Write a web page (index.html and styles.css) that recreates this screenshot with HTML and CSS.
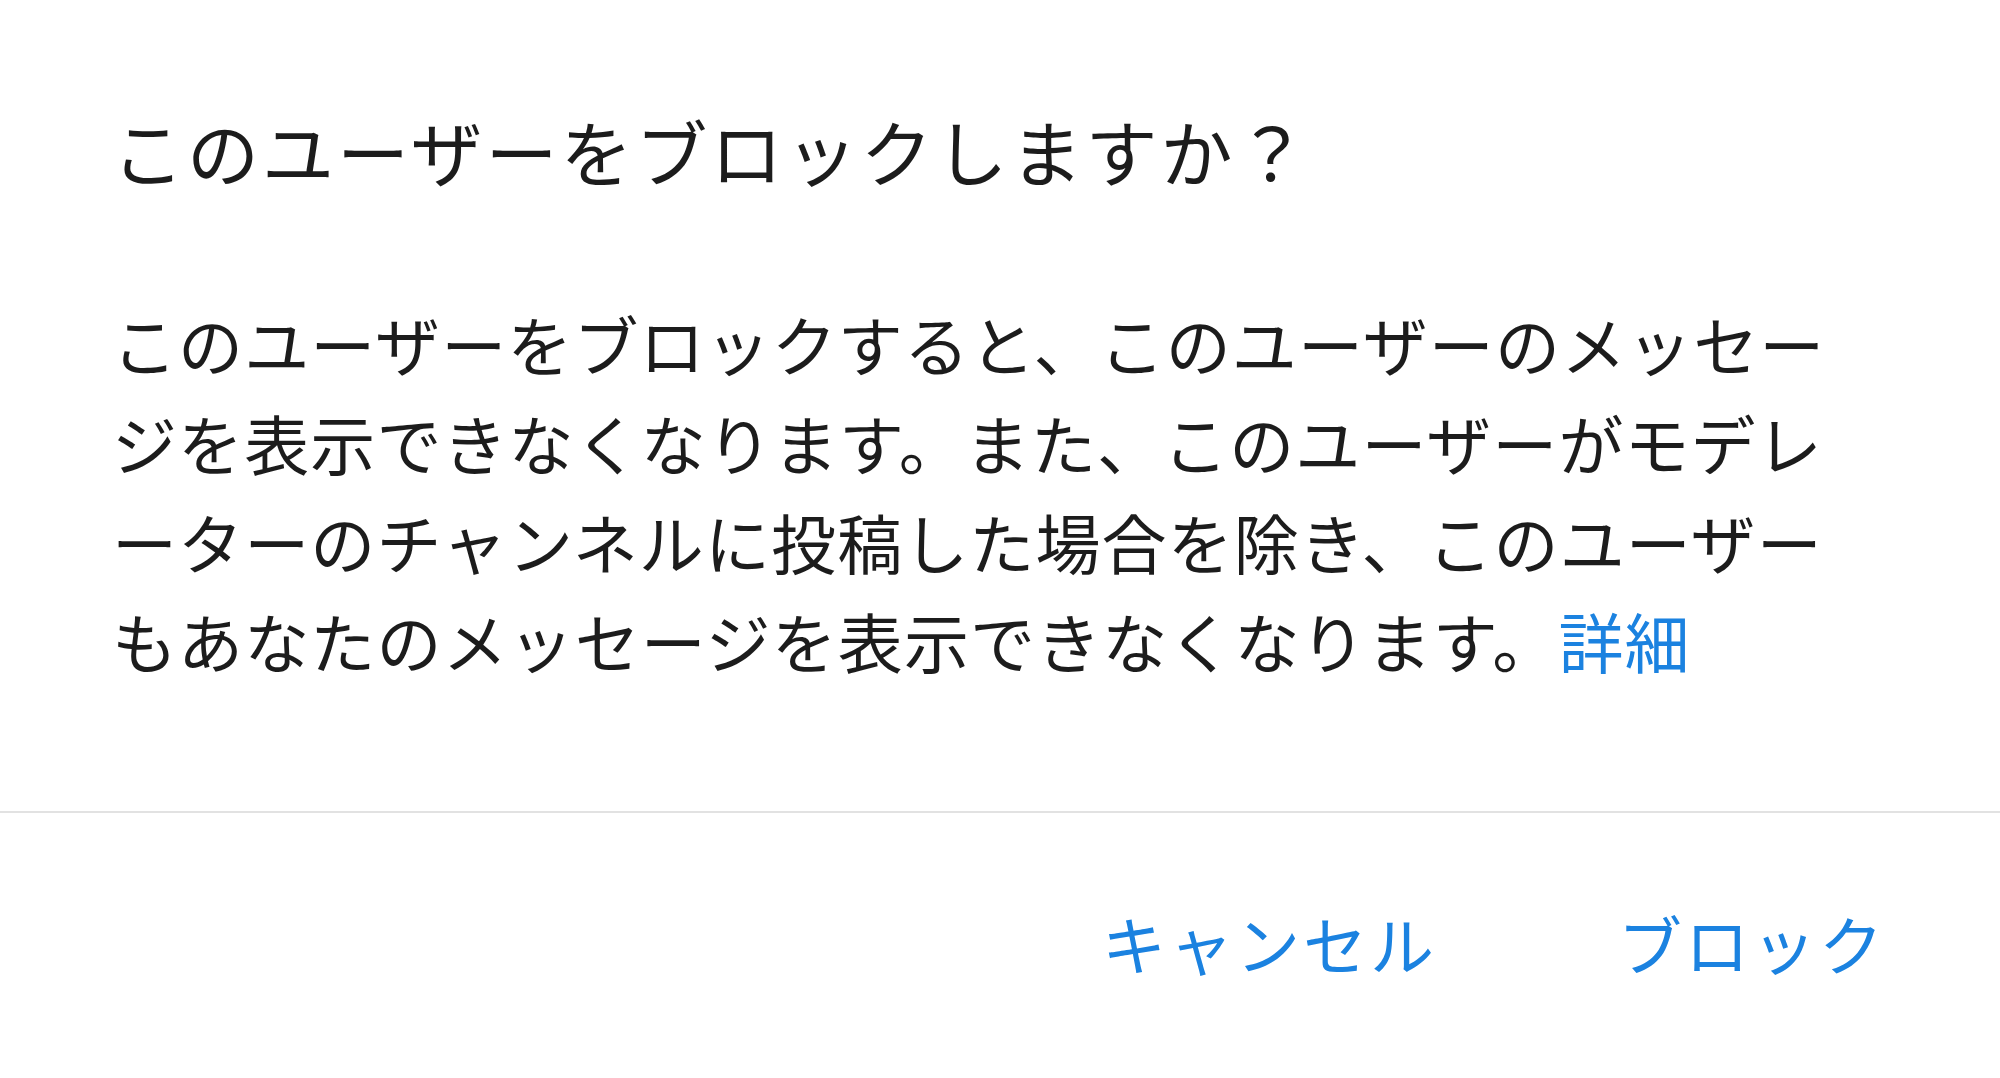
FILE: index.html
```html
<!DOCTYPE html>
<html lang="ja">
<head>
  <meta charset="utf-8">
  <title>ブロック</title>
  <link rel="stylesheet" href="styles.css">
</head>
<body>
  <div class="dialog">
    <div class="dialog-body">
      <h2 class="dialog-title">このユーザーをブロックしますか？</h2>
      <p class="dialog-text">このユーザーをブロックすると、このユーザーのメッセージを表示できなくなります。また、このユーザーがモデレーターのチャンネルに投稿した場合を除き、このユーザーもあなたのメッセージを表示できなくなります。<a href="#" class="link">詳細</a></p>
    </div>

    <!-- Actions -->
    <div class="dialog-actions">
      <button class="btn">キャンセル</button>
      <button class="btn">ブロック</button>
    </div>
  </div>
</body>
</html>
```

FILE: styles.css
```css
* {
  box-sizing: border-box;
  margin: 0;
  padding: 0;
  font-family: "Noto Sans CJK JP", "Noto Sans", sans-serif;
}

body {
  background: #fff;
  color: #1c1c1c;
  width: 2000px;
  height: 1078px;
  overflow: hidden;
}

.dialog {
  width: 100%;
  height: 100%;
}

.dialog-body {
  padding: 100px 112px 121px;
  border-bottom: 2px solid #e2e2e2;
}

.dialog-title {
  font-size: 72px;
  font-weight: 400;
  line-height: 100px;
  letter-spacing: 3px;
  margin-bottom: 94px;
}

.dialog-text {
  width: 1750px;
  font-size: 65px;
  line-height: 99px;
  letter-spacing: 1.1px;
  line-break: anywhere;
}

.link {
  color: #1b82e0;
  text-decoration: none;
}

.dialog-actions {
  display: flex;
  justify-content: flex-end;
  gap: 181px;
  padding: 79px 114px 0;
}

.btn {
  background: none;
  border: none;
  color: #1b82e0;
  font-size: 64px;
  line-height: 100px;
  letter-spacing: 3px;
  cursor: pointer;
}
```
